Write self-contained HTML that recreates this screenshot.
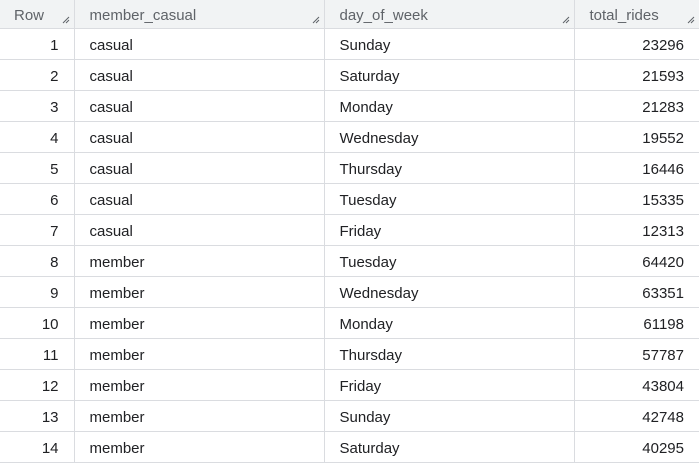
<!DOCTYPE html><html><head><style>
body{margin:0;width:699px;height:462px;overflow:hidden;background:#fff;font-family:"Liberation Sans",sans-serif;font-size:15px;color:#202124}
table{border-collapse:collapse;table-layout:fixed;width:699px}
td,th{height:28px;padding-top:2px;padding-bottom:0;border-bottom:1px solid #dadce0;border-right:1px solid #dadce0;padding-left:15px;padding-right:15px;white-space:nowrap;font-weight:normal;text-align:left;position:relative}
th{height:26px;background:#f1f3f4;color:#5f6368;padding-left:15px}
th:first-child{padding-left:14px}
td:first-child{text-align:right;padding-right:15px}
td:last-child{text-align:right;padding-right:15px}
td:last-child,th:last-child{border-right:none}
th svg{position:absolute;right:4px;bottom:4px}
</style></head><body><table>
<colgroup><col style="width:74px"><col style="width:250px"><col style="width:250px"><col style="width:125px"></colgroup>
<tr><th>Row<svg width="8" height="8"><path d="M7 1L1 7M7 4L4 7" stroke="#5f6368" stroke-width="1"/></svg></th><th>member_casual<svg width="8" height="8"><path d="M7 1L1 7M7 4L4 7" stroke="#5f6368"/></svg></th><th>day_of_week<svg width="8" height="8"><path d="M7 1L1 7M7 4L4 7" stroke="#5f6368"/></svg></th><th>total_rides<svg width="8" height="8"><path d="M7 1L1 7M7 4L4 7" stroke="#5f6368"/></svg></th></tr>
<tr><td>1</td><td>casual</td><td>Sunday</td><td>23296</td></tr>
<tr><td>2</td><td>casual</td><td>Saturday</td><td>21593</td></tr>
<tr><td>3</td><td>casual</td><td>Monday</td><td>21283</td></tr>
<tr><td>4</td><td>casual</td><td>Wednesday</td><td>19552</td></tr>
<tr><td>5</td><td>casual</td><td>Thursday</td><td>16446</td></tr>
<tr><td>6</td><td>casual</td><td>Tuesday</td><td>15335</td></tr>
<tr><td>7</td><td>casual</td><td>Friday</td><td>12313</td></tr>
<tr><td>8</td><td>member</td><td>Tuesday</td><td>64420</td></tr>
<tr><td>9</td><td>member</td><td>Wednesday</td><td>63351</td></tr>
<tr><td>10</td><td>member</td><td>Monday</td><td>61198</td></tr>
<tr><td>11</td><td>member</td><td>Thursday</td><td>57787</td></tr>
<tr><td>12</td><td>member</td><td>Friday</td><td>43804</td></tr>
<tr><td>13</td><td>member</td><td>Sunday</td><td>42748</td></tr>
<tr><td>14</td><td>member</td><td>Saturday</td><td>40295</td></tr>
</table></body></html>
